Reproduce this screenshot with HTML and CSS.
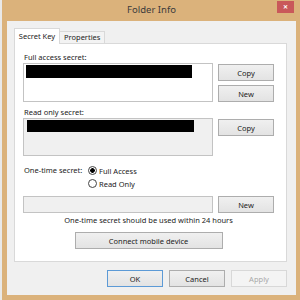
FILE: index.html
```html
<!DOCTYPE html>
<html>
  <head>
    <title>Folder Info</title>
    <meta name="viewport" content="width=device-width, initial-scale=1" />
    <link rel="stylesheet" href="styles.css">
  </head>
  <body>
    <div class="window">
      <div class="titlebar">
        <span class="title">Folder Info</span>
        <button class="close">&#x2715;</button>
      </div>
      <div class="client">
        <div class="tabs">
          <span class="tab active">Secret Key</span>
          <span class="tab">Properties</span>
        </div>
        <div class="panel">
          <div class="label">Full access secret:</div>
          <div class="row">
            <div class="box tall"><span class="secret"></span></div>
            <div class="buttons">
              <button class="btn">Copy</button>
              <button class="btn">New</button>
            </div>
          </div>
          <div class="label second">Read only secret:</div>
          <div class="row">
            <div class="box tall readonly"><span class="secret ro"></span></div>
            <div class="buttons">
              <button class="btn">Copy</button>
            </div>
          </div>
          <div class="options">
            <span class="option-label">One-time secret:</span>
            <div class="radios">
              <label class="radio"><input type="radio" name="otp" checked />Full Access</label>
              <label class="radio"><input type="radio" name="otp" />Read Only</label>
            </div>
          </div>
          <div class="row onetime">
            <div class="box readonly"></div>
            <button class="btn">New</button>
          </div>
          <div class="note">One-time secret should be used within 24 hours</div>
          <button class="btn connect">Connect mobile device</button>
        </div>
        <div class="footer">
          <button class="btn default">OK</button>
          <button class="btn">Cancel</button>
          <button class="btn" disabled>Apply</button>
        </div>
      </div>
    </div>
  </body>
</html>
```

FILE: styles.css
```css
* {
  box-sizing: border-box;
}
body {
  margin: 0;
  background: #e9e9e9;
  font-family: "Noto Sans", "Open Sans", sans-serif;
  font-size: 7.5px;
  color: #222;
}
.window {
  margin-left: 2px;
  width: 298px;
  height: 300px;
  background: #dbb27b;
  display: flex;
  flex-direction: column;
  padding: 0 4px 5px 5px;
}
.titlebar {
  height: 21px;
  display: grid;
  grid-template-columns: 1fr auto 1fr;
  align-items: start;
}
.title {
  grid-column: 2;
  line-height: 20px;
  font-size: 9.5px;
  color: #3b3b3b;
}
.close {
  justify-self: end;
  width: 17px;
  height: 12px;
  margin: 1px 2px 0 0;
  padding: 0;
  border: none;
  background: #c9585a;
  color: #fff;
  font-size: 6px;
  font-weight: bold;
  line-height: 12px;
}
.client {
  flex: 1;
  background: #f0f0f0;
  padding: 7px 9px 0 7px;
  display: flex;
  flex-direction: column;
}
.tabs {
  display: flex;
  align-items: flex-end;
  height: 15px;
}
.tab {
  height: 12px;
  line-height: 11px;
  padding: 0 4px;
  white-space: nowrap;
  border: 1px solid #d9d9d9;
  border-bottom: none;
  border-left: none;
  background: #f3f3f3;
}
.tab.active {
  position: relative;
  z-index: 1;
  width: 46px;
  height: 16px;
  line-height: 15px;
  padding: 0;
  margin-bottom: -1px;
  text-align: center;
  border-left: 1px solid #d9d9d9;
  background: #fff;
}
.panel {
  height: 219px;
  background: #fff;
  border: 1px solid #d9d9d9;
  padding: 7px 12px 0 8px;
  display: flex;
  flex-direction: column;
}
.label {
  line-height: 12px;
  padding-left: 1px;
}
.label.second {
  margin-top: 4px;
}
.row {
  display: grid;
  grid-template-columns: 190px 56px;
  column-gap: 5px;
  align-items: start;
}
.box {
  height: 17px;
  border: 1px solid #c3c3c3;
  background: #fff;
}
.box.tall {
  height: 39px;
}
.box.readonly {
  background: #f0f0f0;
}
.box.tall.readonly {
  height: 38px;
}
.secret {
  display: block;
  height: 13px;
  margin: 1px 20px 0 2px;
  background: #000;
}
.secret.ro {
  height: 12px;
  margin: 1px 18px 0 3px;
}
.buttons {
  display: flex;
  flex-direction: column;
  gap: 4px;
  padding-top: 1px;
}
.btn {
  width: 56px;
  height: 17px;
  padding: 0;
  border: 1px solid #adadad;
  background: linear-gradient(#f0f0f0, #e3e3e3);
  font-family: inherit;
  font-size: 7.5px;
  color: #222;
}
.btn.default {
  border-color: #5c9ad6;
}
.btn:disabled {
  border-color: #d8d8d8;
  background: #f4f4f4;
  color: #a8a8a8;
}
.options {
  display: flex;
  margin-top: 8px;
}
.option-label {
  width: 65px;
  padding-left: 1px;
  line-height: 13px;
}
.radios {
  display: flex;
  flex-direction: column;
}
.radio {
  display: flex;
  align-items: center;
  gap: 2px;
  height: 13px;
}
.radio input {
  appearance: none;
  width: 9px;
  height: 9px;
  margin: 0;
  border: 1px solid #444;
  border-radius: 50%;
  background: #fff;
}
.radio input:checked {
  background: radial-gradient(circle, #000 2px, #fff 2.6px);
}
.onetime {
  margin-top: 6px;
}
.note {
  margin-top: 1px;
  line-height: 12px;
  text-align: center;
}
.btn.connect {
  align-self: center;
  width: 148px;
  margin-top: 6px;
}
.footer {
  display: flex;
  justify-content: flex-end;
  gap: 6px;
  padding-top: 8px;
}
```
